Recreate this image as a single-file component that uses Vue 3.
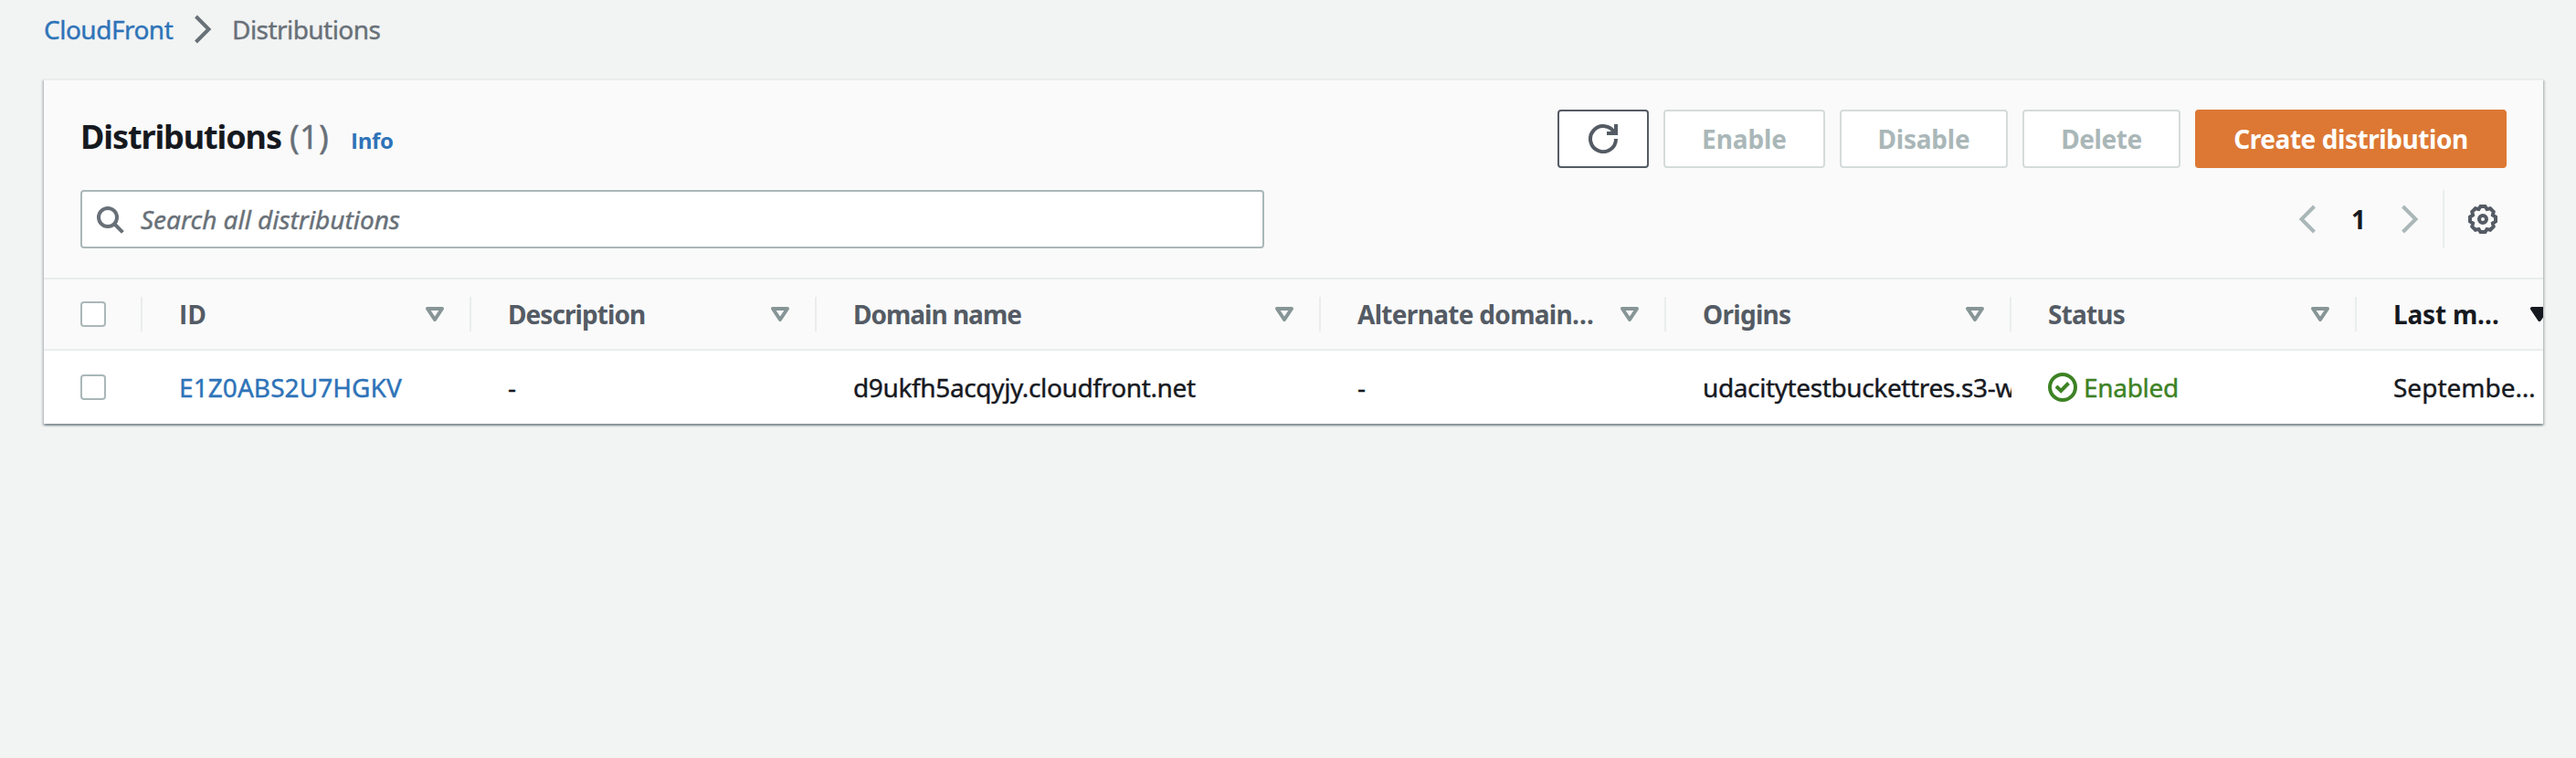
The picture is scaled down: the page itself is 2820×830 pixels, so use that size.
<script setup>
const columns = [
  { key: 'id', title: 'ID' },
  { key: 'desc', title: 'Description' },
  { key: 'domain', title: 'Domain name' },
  { key: 'alt', title: 'Alternate domain…' },
  { key: 'origins', title: 'Origins' },
  { key: 'status', title: 'Status' },
  { key: 'modified', title: 'Last m…', sorted: true },
]
const rows = [
  {
    id: 'E1Z0ABS2U7HGKV',
    desc: '-',
    domain: 'd9ukfh5acqyjy.cloudfront.net',
    alt: '-',
    origins: 'udacitytestbuckettres.s3-w',
    status: 'Enabled',
    modified: 'Septembe…',
  },
]
</script>

<template>
  <div class="page">
    <nav class="crumbs">
      <a class="crumb-link">CloudFront</a>
      <svg class="crumb-sep" width="32" height="32" viewBox="0 0 32 32"><path d="M9.5 2L23.5 16L9.5 30" /></svg>
      <span class="crumb-here">Distributions</span>
    </nav>

    <section class="card">
      <header class="head">
        <div class="head-row">
          <h2 class="title"><span class="title-text">Distributions</span><span class="count">(1)</span><a class="info">Info</a></h2>
          <div class="actions">
            <button class="btn refresh">
              <svg width="32" height="32" viewBox="0 0 16 16">
                <path d="M10 5h5V0M15 8a7 7 0 1 1-.7-3" />
              </svg>
            </button>
            <button class="btn off enable">Enable</button>
            <button class="btn off disable">Disable</button>
            <button class="btn off delete">Delete</button>
            <button class="btn primary">Create distribution</button>
          </div>
        </div>
        <div class="head-row">
          <div class="search">
            <svg width="32" height="32" viewBox="0 0 16 16"><circle cx="7" cy="7" r="5" /><path d="M15.2 15.2l-4.7-4.7" /></svg>
            <span class="placeholder">Search all distributions</span>
          </div>
          <div class="tools">
            <svg class="arrow" width="32" height="32" viewBox="0 0 32 32"><path d="M22.5 2L8.5 16L22.5 30" /></svg>
            <span class="page-no">1</span>
            <svg class="arrow" width="32" height="32" viewBox="0 0 32 32"><path d="M9.5 2L23.5 16L9.5 30" /></svg>
            <span class="tools-sep"></span>
            <svg class="gear" width="32" height="32" viewBox="-16 -16 32 32">
              <path d="M-2.5-14H2.5L4.5-10.9L8.1-11.7L11.7-8.1L10.9-4.5L14-2.5V2.5L10.9 4.5L11.7 8.1L8.1 11.7L4.5 10.9L2.5 14H-2.5L-4.5 10.9L-8.1 11.7L-11.7 8.1L-10.9 4.5L-14 2.5V-2.5L-10.9-4.5L-11.7-8.1L-8.1-11.7L-4.5-10.9Z" />
              <circle r="4" />
            </svg>
          </div>
        </div>
      </header>

      <div class="grid grid-head">
        <div class="check"><span class="box"></span></div>
        <div v-for="c in columns" :key="c.key" class="th" :class="['h-' + c.key, { sorted: c.sorted }]">
          <span class="th-text">{{ c.title }}</span>
          <svg width="32" height="32" viewBox="0 0 16 16"><path d="M4 5h8l-4 6z" /></svg>
        </div>
      </div>
      <div v-for="r in rows" :key="r.id" class="grid grid-row">
        <div class="check"><span class="box"></span></div>
        <div v-for="c in columns" :key="c.key" class="td" :class="'c-' + c.key">
          <svg v-if="c.key === 'status'" width="32" height="32" viewBox="0 0 32 32">
            <circle cx="16" cy="16" r="14" /><path d="M9 15L14.2 20L22.5 11.5" />
          </svg>
          <span class="td-text">{{ r[c.key] }}</span>
        </div>
      </div>
    </section>
  </div>
</template>

<style>
body { background: #f2f3f3; }
</style>

<style scoped>
.page {
  box-sizing: border-box;
  width: 2820px;
  height: 830px;
  padding: 0 36px 0 48px;
  overflow: hidden;
  background: #f2f3f3;
  color: #16191f;
  font: 400 28px/40px "Noto Sans", "Open Sans", sans-serif;
  white-space: nowrap;
}
svg { display: block; flex: none; fill: none; stroke: currentColor; }
.crumbs, .count, .placeholder, .td-text { -webkit-text-stroke: 0.4px currentColor; }

.crumbs { display: flex; align-items: center; height: 64px; margin-bottom: 22px; color: #687078; }
.crumb-link { width: 157px; padding-bottom: 1px; color: #2e73b8; letter-spacing: -0.5px; }
.crumb-sep { stroke-width: 4; }
.crumb-here { margin-left: 17px; padding-bottom: 1px; letter-spacing: -0.55px; }

.card {
  border-top: 2px solid #eaeded;
  background: #fff;
  box-shadow: 0 2px 2px 0 rgba(0, 28, 36, 0.3), 2px 2px 2px 0 rgba(0, 28, 36, 0.15), -2px 2px 2px 0 rgba(0, 28, 36, 0.15);
}
.head {
  display: flex;
  flex-direction: column;
  gap: 24px;
  padding: 32px 40px;
  background: #fafafa;
  border-bottom: 2px solid #e9eceb;
}
.head-row { display: flex; justify-content: space-between; height: 64px; }

.title { display: flex; align-items: baseline; margin: 0; padding-top: 6px; font-size: 36px; line-height: 48px; }
.title-text { width: 229px; letter-spacing: -1.1px; }
.count { width: 67px; color: #687078; font-weight: 400; letter-spacing: 0.3px; }
.info { color: #2e73b8; font: 700 24px/32px "Open Sans", sans-serif; letter-spacing: -0.3px; }

.actions { display: flex; gap: 16px; }
.btn {
  display: flex;
  align-items: center;
  justify-content: center;
  box-sizing: border-box;
  height: 64px;
  margin: 0;
  padding: 0 0 1px;
  border: 2px solid #545b64;
  border-radius: 4px;
  background: #fff;
  color: #545b64;
  font: 700 28px/40px "Noto Sans", sans-serif;
}
.refresh { width: 100px; padding: 0; }
.refresh svg { stroke-width: 2; }
.off { border-color: #d5dbdb; color: #aab7b8; }
.enable { width: 177px; letter-spacing: -0.1px; }
.disable { width: 184px; letter-spacing: -0.2px; }
.delete { width: 173px; letter-spacing: -0.4px; }
.primary { width: 341px; border-color: #dd7834; background: #dd7834; color: #fff; letter-spacing: -0.44px; }

.search {
  display: flex;
  align-items: center;
  box-sizing: border-box;
  width: 1296px;
  height: 64px;
  padding-left: 14px;
  border: 2px solid #aab7b8;
  border-radius: 4px;
  background: #fff;
  color: #687078;
}
.search svg { stroke-width: 2; }
.placeholder { margin-left: 18px; padding-bottom: 1px; font-style: italic; letter-spacing: -0.03px; }

.tools { display: flex; align-items: center; }
.arrow { color: #aab7b8; stroke-width: 4; }
.page-no { width: 78px; padding-bottom: 1px; text-align: center; font-weight: 700; }
.tools-sep { width: 2px; height: 64px; margin: 0 26px 0 21px; background: #eaeded; }
.gear { margin-right: 10px; color: #545b64; stroke-width: 4; }

.grid { display: grid; grid-template-columns: 108px 360px 378px 552px 378px 378px 378px 240px; overflow: hidden; }
.grid-head { height: 76px; align-items: center; background: #fafafa; border-bottom: 2px solid #eaeded; }
.grid-row { height: 80px; align-items: center; }
.check { display: flex; align-items: center; height: 38px; padding-left: 40px; }
.grid-head .check, .th { border-right: 2px solid #eaeded; }
.box { box-sizing: border-box; width: 28px; height: 28px; border: 2px solid #aab7b8; border-radius: 4px; background: #fff; }
.th {
  display: flex;
  align-items: center;
  justify-content: space-between;
  height: 38px;
  padding: 0 22px 0 40px;
  color: #545b64;
  font-weight: 700;
}
.th-text { padding-bottom: 1px; }
.th svg { color: #879596; stroke-width: 2; stroke-linejoin: round; }
.sorted, .sorted svg { color: #16191f; }
.sorted svg { fill: currentColor; }
.h-id { font-family: "Open Sans", sans-serif; }
.h-desc { letter-spacing: -0.93px; }
.h-domain { letter-spacing: -1px; }
.h-alt { letter-spacing: -0.69px; }
.h-origins { letter-spacing: -0.7px; }
.h-status { letter-spacing: -0.8px; }
.h-modified { letter-spacing: -0.2px; }

.td { display: flex; align-items: center; height: 80px; padding-left: 40px; overflow: hidden; }
.td-text { padding-bottom: 1px; }
.td svg { margin-right: 7px; stroke-width: 4; }
.c-id { color: #2e73b8; letter-spacing: 0.07px; }
.c-domain { letter-spacing: -0.36px; }
.c-origins { letter-spacing: -0.38px; }
.c-status { color: #3d8224; letter-spacing: -0.3px; }
</style>
